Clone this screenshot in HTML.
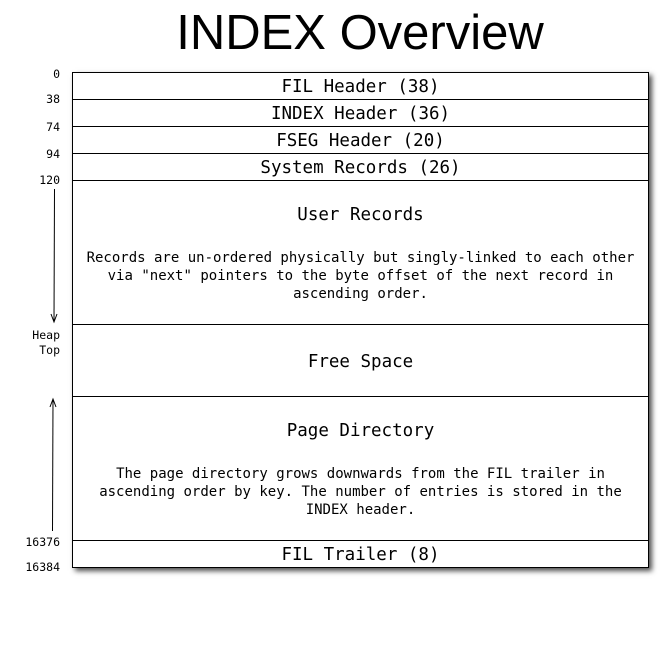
<!DOCTYPE html>
<html><head><style>
body{margin:0;width:671px;height:648px;background:#fff;position:relative;overflow:hidden;font-family:"DejaVu Sans Mono","Liberation Mono",monospace;color:#000}
.t{position:absolute;left:0;width:720px;top:5px;text-align:center;font:49px "Liberation Sans",sans-serif;}
#box{position:absolute;left:72px;top:72px;width:575px;height:494px;border:1px solid #000;box-shadow:3px 3px 5px rgba(0,0,0,.7);background:#fff}
.r{position:absolute;left:0;width:575px;border-bottom:1px solid #000;text-align:center;box-sizing:border-box}
.h{font-size:17.5px;line-height:28px}
.p{font-size:14px;line-height:18px;padding:0 12px}
.l{position:absolute;right:611px;font-size:11.5px;line-height:12px;text-align:right}
</style></head><body>
<div class="t">INDEX Overview</div>
<div id="box">
<div class="r h" style="top:0;height:27px">FIL Header (38)</div>
<div class="r h" style="top:27px;height:27px">INDEX Header (36)</div>
<div class="r h" style="top:54px;height:27px">FSEG Header (20)</div>
<div class="r h" style="top:81px;height:27px">System Records (26)</div>
<div class="r" style="top:108px;height:144px">
 <div class="h" style="margin-top:20px">User Records</div>
 <div class="p" style="margin-top:20px">Records are un-ordered physically but singly-linked to each other via "next" pointers to the byte offset of the next record in ascending order.</div>
</div>
<div class="r" style="top:252px;height:72px"><div class="h" style="margin-top:23px">Free Space</div></div>
<div class="r" style="top:324px;height:144px">
 <div class="h" style="margin-top:20px">Page Directory</div>
 <div class="p" style="margin-top:20px">The page directory grows downwards from the FIL trailer in ascending order by key. The number of entries is stored in the INDEX header.</div>
</div>
<div class="r h" style="top:468px;height:26px;border:none">FIL Trailer (8)</div>
</div>
<div class="l" style="top:68px">0</div>
<div class="l" style="top:93px">38</div>
<div class="l" style="top:121px">74</div>
<div class="l" style="top:148px">94</div>
<div class="l" style="top:174px">120</div>
<div class="l" style="top:328px;line-height:15px">Heap<br>Top</div>
<div class="l" style="top:536px">16376</div>
<div class="l" style="top:561px">16384</div>
<svg style="position:absolute;left:0;top:0" width="100" height="648">
<line x1="54.5" y1="189" x2="54" y2="322" stroke="#000" stroke-width="1"/>
<polyline points="51,314 54,322 57,314" fill="none" stroke="#000"/>
<line x1="52.5" y1="531" x2="53" y2="399" stroke="#000" stroke-width="1"/>
<polyline points="50,407 53,399 56,407" fill="none" stroke="#000"/>
</svg>
</body></html>
